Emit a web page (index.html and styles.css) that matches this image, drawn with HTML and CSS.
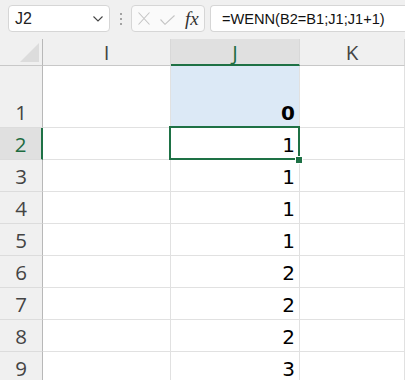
FILE: index.html
```html
<!DOCTYPE html>
<html>
<head>
<meta charset="utf-8">
<link rel="stylesheet" href="styles.css">
</head>
<body>
<div class="app">
  <div class="toolbar">
    <div class="namebox">
      <span class="name">J2</span>
      <svg class="chev" width="10" height="6" viewBox="0 0 10 6"><path d="M0.5 0.5 L5 5 L9.5 0.5" fill="none" stroke="#444" stroke-width="1.1"/></svg>
    </div>
    <div class="dots"><i></i><i></i><i></i></div>
    <div class="fxbox">
      <svg class="ico" width="12" height="13" viewBox="0 0 12 13"><path d="M0.5 0.5 L11.5 12.5 M11.5 0.5 L0.5 12.5" stroke="#c4c4c4" stroke-width="1.1" fill="none"/></svg>
      <svg class="ico" width="15" height="10" viewBox="0 0 15 10"><path d="M0.5 4.5 L5 9.3 L14.5 0.5" stroke="#c4c4c4" stroke-width="1.1" fill="none"/></svg>
      <span class="fx">fx</span>
    </div>
    <div class="formula">=WENN(B2=B1;J1;J1+1)</div>
  </div>
  <div class="grid">
    <div class="hd corner"><div class="tri"></div></div>
    <div class="hd col">I</div>
    <div class="hd col sel">J</div>
    <div class="hd col">K</div>

    <div class="hd row">1</div><div class="c"></div><div class="c v hl b">0</div><div class="c"></div>
    <div class="hd row rsel">2</div><div class="c"></div><div class="c v active">1<span class="handle"></span></div><div class="c"></div>
    <div class="hd row">3</div><div class="c"></div><div class="c v">1</div><div class="c"></div>
    <div class="hd row">4</div><div class="c"></div><div class="c v">1</div><div class="c"></div>
    <div class="hd row">5</div><div class="c"></div><div class="c v">1</div><div class="c"></div>
    <div class="hd row">6</div><div class="c"></div><div class="c v">2</div><div class="c"></div>
    <div class="hd row">7</div><div class="c"></div><div class="c v">2</div><div class="c"></div>
    <div class="hd row">8</div><div class="c"></div><div class="c v">2</div><div class="c"></div>
    <div class="hd row">9</div><div class="c"></div><div class="c v">3</div><div class="c"></div>
  </div>
</div>
</body>
</html>
```

FILE: styles.css
```css
* { box-sizing: border-box; }
html, body { margin: 0; padding: 0; }
body { width: 405px; height: 380px; overflow: hidden; background: #f0f0f0; }
.app { width: 405px; height: 380px; overflow: hidden; }

.toolbar {
  height: 39px;
  display: flex;
  align-items: flex-start;
  padding: 5px 0 0 8px;
  font-family: "Liberation Sans", Arial, sans-serif;
}
.namebox {
  width: 102px; height: 27px;
  background: #fff;
  border: 1px solid #d6d6d6;
  border-radius: 4px;
  display: flex; align-items: center; justify-content: space-between;
  padding: 0 6px 0 6px;
}
.name { font-size: 16px; color: #222; }
.chev { margin-top: 1px; }
.dots {
  width: 21px; height: 27px;
  display: flex; flex-direction: column; align-items: center; justify-content: center; gap: 3px;
}
.dots i { display: block; width: 2px; height: 2px; background: #8a8a8a; border-radius: 1px; }
.fxbox {
  width: 74px; height: 27px;
  background: #fafafa;
  border: 1px solid #d6d6d6;
  border-radius: 4px;
  display: flex; align-items: center;
  padding: 0 0 0 6px; gap: 9px;
}
.fxbox .ico:nth-child(2) { margin-left: 1px; margin-top: 2px; }
.fx {
  font-family: "Liberation Serif", "DejaVu Serif", serif;
  font-style: italic; font-size: 19px; color: #333;
  margin-left: 1px; letter-spacing: 0px;
}
.formula {
  margin-left: 5px;
  flex: 1; height: 27px;
  background: #fff;
  border: 1px solid #d6d6d6; border-right: none;
  border-radius: 4px 0 0 4px;
  display: flex; align-items: center;
  padding-left: 11px;
  font-size: 14.6px; color: #111;
}

.grid {
  display: grid;
  grid-template-columns: 43px 128px 129px 1fr;
  grid-template-rows: 27px 62px repeat(8, 32px);
  background: #fff;
}
.hd {
  background: #f0f0f0;
  font-family: "Open Sans", "Noto Sans", sans-serif;
  font-size: 20.5px; color: #444;
  display: flex; justify-content: center;
}
.corner { border-right: 1px solid #b8b8b8; border-bottom: 1px solid #c8c8c8; align-items: flex-end; justify-content: flex-end; padding: 0 3px 3px 0; }
.tri { width: 19px; height: 19px; background: #dcdcdc; clip-path: polygon(100% 0, 100% 100%, 0 100%); }
.col { border-bottom: 1px solid #c8c8c8; border-right: 1px solid #d8d8d8; align-items: center; line-height: 1; padding-top: 1px; }
.col.sel { background: #e0e0e0; color: #1e6b41; border-bottom: 2px solid #1e7145; }
.row { border-right: 1px solid #b8b8b8; border-bottom: 1px solid #dcdcdc; align-items: flex-end; line-height: 1; padding-bottom: 5px; }
.row.rsel { background: #e0e0e0; color: #1e6b41; border-right: 2px solid #1e7145; }
.c {
  border-right: 1px solid #e1e1e1; border-bottom: 1px solid #e1e1e1;
  font-family: "DejaVu Sans", sans-serif;
  font-size: 20px; color: #000;
}
.v { display: flex; align-items: flex-end; justify-content: flex-end; padding: 0 4px 4px 0; line-height: 1; }
.hl { background: #dce9f6; }
.b { font-weight: bold; }
.active { position: relative; }
.active::before {
  content: ""; position: absolute;
  left: -2px; top: -2px; right: -1px; bottom: -1px;
  border: 2px solid #1e7145;
}
.handle {
  position: absolute; right: -3px; bottom: -4px;
  width: 6px; height: 6px; background: #1e7145;
  box-shadow: 0 0 0 1px #fff;
}
```
